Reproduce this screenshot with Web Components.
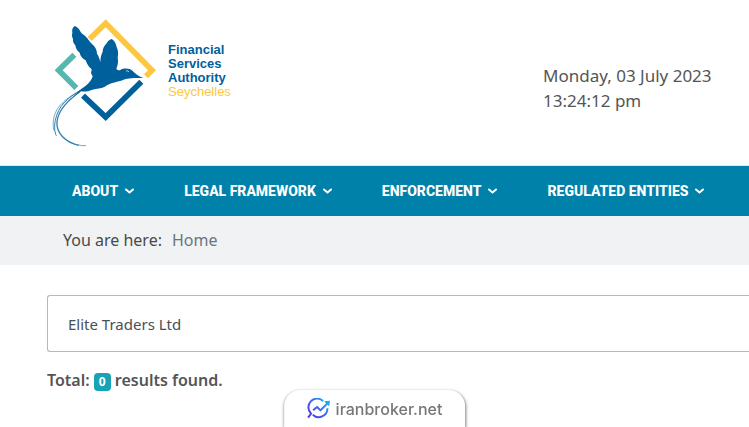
<!DOCTYPE html>
<html lang="en">
<head>
<meta charset="utf-8">
<meta name="viewport" content="width=device-width, initial-scale=1">
<title>Financial Services Authority Seychelles</title>
<style>
    body {
        margin: 0;
        background: #fff;
        color: #555;
        font-family: "Noto Sans", "Open Sans", sans-serif;
        font-size: 16px;
        line-height: 25px;
        overflow-x: hidden;
    }
</style>
</head>
<body>

<site-header>
    <fsa-logo></fsa-logo>
    <date-clock slot="clock" date="Monday, 03 July 2023" time="13:24:12 pm"></date-clock>
</site-header>

<main-nav>
    <nav-item href="#about">ABOUT</nav-item>
    <nav-item href="#legal">LEGAL FRAMEWORK</nav-item>
    <nav-item href="#enforcement">ENFORCEMENT</nav-item>
    <nav-item href="#entities">REGULATED ENTITIES</nav-item>
</main-nav>

<bread-crumb label="You are here:" href="#home">Home</bread-crumb>

<search-panel value="Elite Traders Ltd" total="0"></search-panel>

<source-tab>iranbroker.net</source-tab>

<script>
// Base class: every component gets an open shadow root filled from template()
class BaseElement extends HTMLElement {
    constructor() {
        super();
        this.attachShadow({ mode: "open" });
    }

    connectedCallback() {
        this.shadowRoot.innerHTML = this.template();
    }
}

// ── Header ────────────────────────────────────────────────
class SiteHeader extends BaseElement {
    template() {
        return `
            <style>
                :host { display: block; border-bottom: 1px solid #e6e6e2; }
                header {
                    display: grid;
                    grid-template-columns: 1fr 206px;
                    align-items: start;
                    padding: 18px 0 17px 50px;
                }
                .clock { padding-top: 45px; }
            </style>
            <header>
                <slot></slot>
                <div class="clock"><slot name="clock"></slot></div>
            </header>
        `;
    }
}

class FsaLogo extends BaseElement {
    template() {
        return `
            <style>
                :host { display: flex; }
                a {
                    display: flex;
                    gap: 8px;
                    color: #00609c;
                    text-decoration: none;
                    font: 700 13px/14px "Liberation Sans", sans-serif;
                }
                svg { display: block; width: 110px; height: 130px; }
                .name { display: grid; align-content: start; padding-top: 25px; }
                .country { color: #fdc740; font-weight: 400; }
            </style>
            <a href="#home">
                <svg viewBox="30 24 330 390" aria-hidden="true">
                    <g fill="none" stroke-width="17">
                        <path stroke="#fdc740" d="M149 87 197 40 336 181 318 199"/>
                        <path stroke="#54b8ae" d="M103 134 56 181 109 234"/>
                        <path stroke="#00609c" d="M129 257 197 321 304 215"/>
                    </g>
                    <path fill="#00609c" d="M105 48C98 51 95 58 97 70 95 75 96 82 99 87 98 95 101 101 106 106 107 116 112 123 119 128 121 139 128 146 137 151 141 163 147 171 155 178L153 190 158 199C154 214 142 225 117 242L104 257 123 244C134 246 145 244 157 239 172 235 182 236 193 231 215 216 234 216 249 210 265 204 281 204 310 204 294 198 286 191 278 183 269 174 251 174 241 180 236 182 232 180 229 176 235 162 235 151 233 143 236 130 234 119 230 112 229 101 222 91 215 87 208 89 202 95 199 101 192 107 188 116 188 125 183 135 181 146 181 157 179 147 176 138 171 131 171 119 165 108 155 101 145 91 139 78 128 72 119 66 120 55 105 48Z"/>
                    <path fill="none" stroke="#fff" stroke-width="2" d="M258 183q6-2 9 3"/>
                    <g fill="none" stroke="#00609c" opacity=".8">
                        <path stroke-width="3" d="M124 240C83 262 54 289 46 331 42 350 44 368 49 377"/>
                        <path stroke-width="4" d="M121 244C83 273 55 299 51 335 48 370 77 397 116 406"/>
                        <path stroke-width="2" d="M117 244C68 270 42 298 40 334 39 346 40 356 42 362M112 404q12 4 26 3"/>
                    </g>
                </svg>
                <span class="name">
                    <span>Financial</span>
                    <span>Services</span>
                    <span>Authority</span>
                    <span class="country">Seychelles</span>
                </span>
            </a>
        `;
    }
}

class DateClock extends BaseElement {
    template() {
        return `
            <style>
                :host { display: block; font-size: 17px; white-space: nowrap; }
                time { display: block; }
            </style>
            <time>${this.getAttribute("date")}</time>
            <time>${this.getAttribute("time")}</time>
        `;
    }
}

// ── Navigation ────────────────────────────────────────────
class MainNav extends BaseElement {
    template() {
        return `
            <style>
                :host { display: block; background: #0081aa; }
                nav {
                    display: flex;
                    align-items: center;
                    gap: 50px;
                    height: 50px;
                    padding-left: 72px;
                }
            </style>
            <nav aria-label="Main"><slot></slot></nav>
        `;
    }
}

class NavItem extends BaseElement {
    template() {
        return `
            <style>
                :host { display: block; flex: none; }
                a {
                    display: flex;
                    align-items: center;
                    gap: 7px;
                    color: #fff;
                    font: 800 14px/20px Roboto, sans-serif;
                    text-decoration: none;
                    white-space: nowrap;
                }
                svg { width: 9px; height: 6px; fill: none; stroke: #fff; stroke-width: 4; }
            </style>
            <a href="${this.getAttribute("href")}">
                <slot></slot>
                <svg viewBox="0 0 18 12" aria-hidden="true">
                    <path stroke-linecap="round" stroke-linejoin="round" d="M2 3 9 9 16 3"/>
                </svg>
            </a>
        `;
    }
}

class BreadCrumb extends BaseElement {
    template() {
        return `
            <style>
                :host { display: block; background: #f0f2f4; }
                nav { display: flex; gap: 10px; padding: 12px 63px; }
                span { color: #4a4a4a; }
                a { color: #6c757d; text-decoration: none; }
            </style>
            <nav aria-label="Breadcrumb">
                <span>${this.getAttribute("label")}</span>
                <a href="${this.getAttribute("href")}"><slot></slot></a>
            </nav>
        `;
    }
}

// ── Search box and result count ───────────────────────────
class SearchPanel extends BaseElement {
    template() {
        return `
            <style>
                :host { display: block; padding: 30px 0 0 47px; }
                input {
                    display: block;
                    box-sizing: border-box;
                    width: 100%;
                    height: 57px;
                    padding: 0 20px;
                    border: 1px solid #b5b9b9;
                    border-right: 0;
                    border-radius: 3px 0 0 3px;
                    color: #495057;
                    background: #fff;
                    font: 15px/20px "Noto Sans", sans-serif;
                }
                p { margin: 16px 0 0; font-weight: 600; }
                .badge {
                    display: inline-block;
                    padding: 0 5px;
                    border-radius: 4px;
                    background: #17a2b8;
                    color: #fff;
                    font-size: 12px;
                    font-weight: 700;
                    line-height: 18px;
                }
            </style>
            <input type="text" aria-label="Company name" value="${this.getAttribute("value")}">
            <p>Total: <span class="badge">${this.getAttribute("total")}</span> results found.</p>
        `;
    }
}

// ── Tab pinned to the bottom edge of the window ───────────
class SourceTab extends BaseElement {
    template() {
        return `
            <style>
                :host {
                    position: fixed;
                    bottom: 0;
                    left: 50%;
                    transform: translateX(-50%);
                }
                a {
                    display: flex;
                    align-items: center;
                    gap: 6px;
                    box-sizing: border-box;
                    height: 37px;
                    padding: 0 23px;
                    border-radius: 16px 16px 0 0;
                    background: #fff;
                    box-shadow: 0 1px 3px #0008;
                    color: #777;
                    font: 500 16px/20px Inter, sans-serif;
                    text-decoration: none;
                }
                svg { width: 23px; height: 21px; }
            </style>
            <a href="#iranbroker">
                <svg viewBox="0 0 69 63" fill="none" stroke="url(#g)" stroke-width="6" aria-hidden="true">
                    <defs>
                        <linearGradient id="g" gradientUnits="userSpaceOnUse" x1="8" y1="60" x2="62" y2="6">
                            <stop offset="0" stop-color="#5a35f5"/>
                            <stop offset=".5" stop-color="#3e62fa"/>
                            <stop offset="1" stop-color="#16b4f5"/>
                        </linearGradient>
                    </defs>
                    <path d="M48 9A26 26 0 0 0 12 47L3 59M17 50A26 26 0 0 0 61 31"/>
                    <path stroke-linejoin="round" d="M18 37 30 27 40 37 62 15"/>
                    <path fill="url(#g)" stroke="none" d="M51 10 69 8 66 25Z"/>
                </svg>
                <slot></slot>
            </a>
        `;
    }
}

customElements.define("site-header", SiteHeader);
customElements.define("fsa-logo", FsaLogo);
customElements.define("date-clock", DateClock);
customElements.define("main-nav", MainNav);
customElements.define("nav-item", NavItem);
customElements.define("bread-crumb", BreadCrumb);
customElements.define("search-panel", SearchPanel);
customElements.define("source-tab", SourceTab);
</script>
</body>
</html>
